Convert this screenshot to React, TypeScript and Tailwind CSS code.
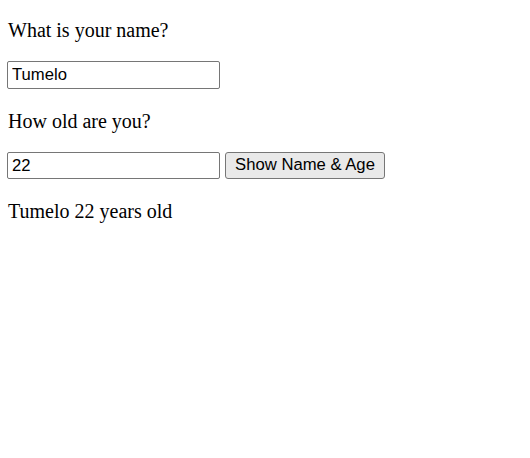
import React, { useState } from "react";

export default function App() {
  const [name, setName] = useState("Tumelo");
  const [age, setAge] = useState("22");
  const serif = { fontFamily: '"Liberation Serif", "Times New Roman", serif' };
  const sans = { fontFamily: '"Liberation Sans", Arial, sans-serif' };
  return (
    <div className="min-h-[458px] bg-white text-black pl-[7px] pt-[19px]" style={serif}>
      <p className="text-[20px] leading-[23px] pl-[1px]">What is your name?</p>
      <div className="mt-[19px] flex">
        <input
          value={name}
          onChange={(e) => setName(e.target.value)}
          className="w-[213px] h-[28px] border border-[#767676] rounded-[2px] px-[4px] text-[16.67px] text-black outline-none"
          style={sans}
        />
      </div>
      <p className="mt-[21px] text-[20px] leading-[23px] pl-[1px]">How old are you?</p>
      <div className="mt-[19px] flex items-start gap-[5px]">
        <input
          value={age}
          onChange={(e) => setAge(e.target.value)}
          className="w-[213px] h-[27px] border border-[#767676] rounded-[2px] px-[4px] text-[16.67px] text-black outline-none"
          style={sans}
        />
        <button
          className="w-[160px] h-[27px] border border-[#767676] rounded-[3px] bg-[#e9e9e9] text-[16.67px] text-black leading-none"
          style={sans}
        >
          Show Name &amp; Age
        </button>
      </div>
      <p className="mt-[21px] text-[20px] leading-[23px] pl-[1px]">
        {name} {age} years old
      </p>
    </div>
  );
}
